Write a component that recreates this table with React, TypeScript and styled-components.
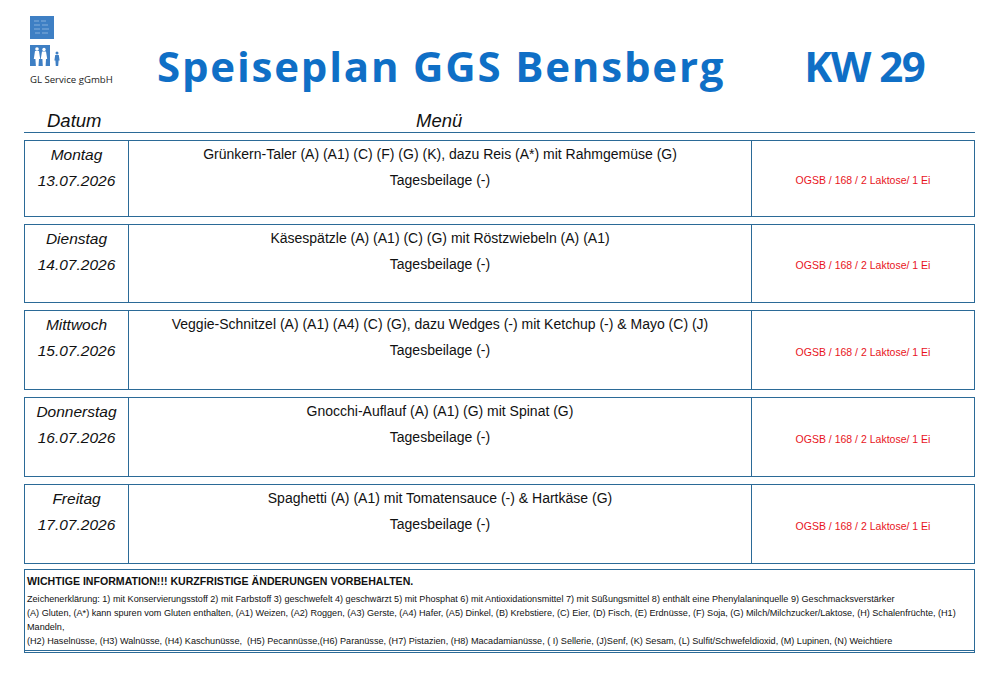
import React from "react";
import styled, { createGlobalStyle } from "styled-components";

const Global = createGlobalStyle`
  html, body { margin: 0; padding: 0; background: #fff; }
  body { font-family: "Liberation Sans", Arial, sans-serif; color: #111; }
`;

const Page = styled.div`
  width: 999px;
  height: 680px;
  box-sizing: border-box;
  padding: 16px 24px 0 24px;
  display: flex;
  flex-direction: column;
`;

const Header = styled.header`
  display: flex;
  align-items: flex-start;
  height: 87px;
`;

const Logo = styled.div`
  width: 127px;
  display: flex;
  flex-direction: column;
  padding-left: 6px;
  box-sizing: border-box;
`;

const LogoText = styled.div`
  font-family: "Open Sans", sans-serif;
  font-size: 9.6px;
  color: #222;
  margin-top: 1px;
  white-space: nowrap;
`;

const Title = styled.h1<{ $ls: number; $ml: number }>`
  margin: 29px 0 0 ${(p) => p.$ml}px;
  font-family: "Open Sans", sans-serif;
  font-weight: 700;
  font-size: 42px;
  line-height: 1;
  color: #0f6fc6;
  letter-spacing: ${(p) => p.$ls}px;
  white-space: nowrap;
`;

const ColHead = styled.div`
  display: grid;
  grid-template-columns: 104px 1fr;
  border-bottom: 1.5px solid #2b6a97;
  height: 30px;
  align-items: end;
  padding-bottom: 1px;
  box-sizing: border-box;
`;

const HeadCell = styled.div<{ $pad: number }>`
  font-style: italic;
  font-size: 18.5px;
  padding-left: ${(p) => p.$pad}px;
  line-height: 20px;
`;

const Rows = styled.div`
  display: flex;
  flex-direction: column;
  gap: 7px;
  margin-top: 7px;
`;

const Row = styled.div<{ $h: number }>`
  display: grid;
  grid-template-columns: 104px 623px 1fr;
  height: ${(p) => p.$h}px;
  border: 1px solid #2b6a97;
  box-sizing: border-box;
`;

const DayCell = styled.div`
  border-right: 1px solid #2b6a97;
  display: flex;
  flex-direction: column;
  align-items: center;
  padding-top: 1px;
  font-style: italic;
  font-size: 15.5px;
  line-height: 26px;
`;

const MenuCell = styled.div`
  border-right: 1px solid #2b6a97;
  display: flex;
  flex-direction: column;
  align-items: center;
  padding-top: 1px;
  font-size: 14px;
  line-height: 25.5px;
`;

const NoteCell = styled.div`
  display: flex;
  align-items: center;
  justify-content: center;
  padding-top: 3px;
  color: #e8141c;
  font-size: 10.5px;
`;

const Footer = styled.div`
  margin-top: 5px;
  border: 1px solid #2b6a97;
  border-bottom: 3px double #2b6a97;
  height: 84px;
  box-sizing: border-box;
  padding: 5px 2px 0 2px;
`;

const FootTitle = styled.div`
  font-weight: 700;
  font-size: 10.6px;
  margin-bottom: 5px;
`;

const FootLine = styled.div`
  font-size: 9.1px;
  line-height: 14px;
  white-space: nowrap;
`;

const LogoSvg = () => (
  <svg width="34" height="56" viewBox="0 0 34 56">
    <rect x="0" y="0" width="24" height="23" fill="#3e7fc4" />
    <g stroke="#b5d0ee" strokeWidth="0.6" fill="none">
      <path d="M4 5h5M11 5h5M4 9h6M12 9h6M4 13h6M12 13h7M5 17h5M12 17h6" />
    </g>
    <rect x="0" y="29" width="20" height="21" fill="#3e7fc4" />
    <g fill="#fff">
      <circle cx="7" cy="33" r="1.8" />
      <path d="M5 35h4l1.2 8h-1.2l-0.5 7h-2.6l-0.5-7H3.8z" />
      <circle cx="14" cy="33.5" r="1.7" />
      <path d="M12 35.5h4l1.2 7.5h-1.2l-0.4 7h-2.8l-0.4-7H10.8z" />
    </g>
    <g fill="#3e7fc4">
      <circle cx="27" cy="37" r="1.5" />
      <path d="M25.2 39h3.6l0.8 5.5h-1l-0.4 5.5h-2.4l-0.4-5.5h-1z" />
    </g>
  </svg>
);

type Day = { day: string; date: string; menu: string; h: number };

const days: Day[] = [
  { day: "Montag", date: "13.07.2026", menu: "Grünkern-Taler (A) (A1) (C) (F) (G) (K), dazu Reis (A*) mit Rahmgemüse (G)", h: 77 },
  { day: "Dienstag", date: "14.07.2026", menu: "Käsespätzle (A) (A1) (C) (G) mit Röstzwiebeln (A) (A1)", h: 79 },
  { day: "Mittwoch", date: "15.07.2026", menu: "Veggie-Schnitzel (A) (A1) (A4) (C) (G), dazu Wedges (-) mit Ketchup (-) & Mayo (C) (J)", h: 80 },
  { day: "Donnerstag", date: "16.07.2026", menu: "Gnocchi-Auflauf (A) (A1) (G) mit Spinat (G)", h: 80 },
  { day: "Freitag", date: "17.07.2026", menu: "Spaghetti (A) (A1) mit Tomatensauce (-) & Hartkäse (G)", h: 80 },
];

export default function App() {
  return (
    <>
      <Global />
      <Page>
        <Header>
          <Logo>
            <LogoSvg />
            <LogoText>GL Service gGmbH</LogoText>
          </Logo>
          <Title $ls={1.8} $ml={6}>Speiseplan GGS Bensberg</Title>
          <Title $ls={-1.5} $ml={79}>KW 29</Title>
        </Header>
        <ColHead>
          <HeadCell $pad={23}>Datum</HeadCell>
          <HeadCell $pad={288}>Menü</HeadCell>
        </ColHead>
        <Rows>
          {days.map((d) => (
            <Row key={d.day} $h={d.h}>
              <DayCell>
                <span>{d.day}</span>
                <span>{d.date}</span>
              </DayCell>
              <MenuCell>
                <span>{d.menu}</span>
                <span>Tagesbeilage (-)</span>
              </MenuCell>
              <NoteCell>OGSB / 168 / 2 Laktose/ 1 Ei</NoteCell>
            </Row>
          ))}
        </Rows>
        <Footer>
          <FootTitle>WICHTIGE INFORMATION!!! KURZFRISTIGE ÄNDERUNGEN VORBEHALTEN.</FootTitle>
          <FootLine>
            Zeichenerklärung: 1) mit Konservierungsstoff 2) mit Farbstoff 3) geschwefelt 4) geschwärzt 5) mit Phosphat 6) mit Antioxidationsmittel 7) mit Süßungsmittel 8) enthält eine Phenylalaninquelle 9) Geschmacksverstärker
          </FootLine>
          <FootLine>
            (A) Gluten, (A*) kann spuren vom Gluten enthalten, (A1) Weizen, (A2) Roggen, (A3) Gerste, (A4) Hafer, (A5) Dinkel, (B) Krebstiere, (C) Eier, (D) Fisch, (E) Erdnüsse, (F) Soja, (G) Milch/Milchzucker/Laktose, (H) Schalenfrüchte, (H1)
          </FootLine>
          <FootLine>Mandeln,</FootLine>
          <FootLine>
            (H2) Haselnüsse, (H3) Walnüsse, (H4) Kaschunüsse,&nbsp; (H5) Pecannüsse,(H6) Paranüsse, (H7) Pistazien, (H8) Macadamianüsse, ( I) Sellerie, (J)Senf, (K) Sesam, (L) Sulfit/Schwefeldioxid, (M) Lupinen, (N) Weichtiere
          </FootLine>
        </Footer>
      </Page>
    </>
  );
}
